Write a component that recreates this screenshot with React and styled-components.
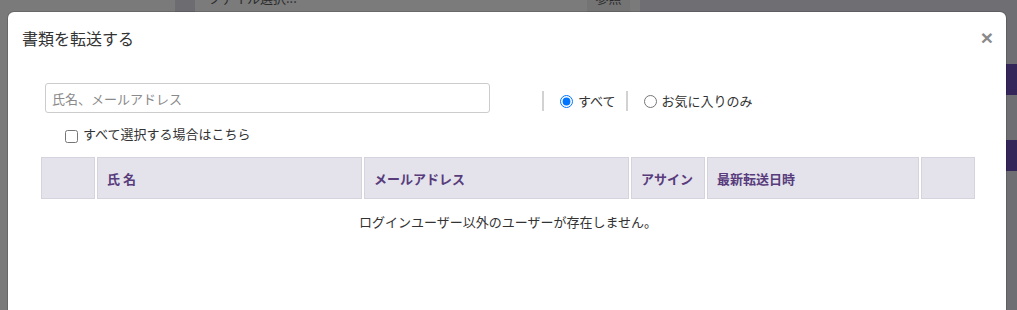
import styled, { createGlobalStyle } from "styled-components";

const GlobalStyle = createGlobalStyle`
  html, body {
    margin: 0;
    padding: 0;
  }
  body {
    font-family: "Noto Sans CJK JP", "Noto Sans", sans-serif;
    color: #333;
    background: #6f6e73;
    overflow: hidden;
  }
`;

const columns = [
  { label: "", width: 54 },
  { label: "氏 名", width: 265 },
  { label: "メールアドレス", width: 265 },
  { label: "アサイン", width: 74 },
  { label: "最新転送日時", width: 212 },
  { label: "", width: 54 },
];

export default function App() {
  return (
    <>
      <GlobalStyle />
      <Screen>
        <LeftPanel>
          <FileGroup>
            <Addon />
            <FileInput>ファイル選択...</FileInput>
            <BrowseButton>参照</BrowseButton>
          </FileGroup>
        </LeftPanel>
        <RightPanel>
          <SideButton>追加</SideButton>
          <SideButton>追加</SideButton>
        </RightPanel>

        <Modal>
          <Header>
            <Title>書類を転送する</Title>
            <Close type="button">×</Close>
          </Header>

          <Body>
            <FilterRow>
              <Search placeholder="氏名、メールアドレス" />
              <RadioGroup>
                <Separator />
                <RadioLabel>
                  <input type="radio" name="scope" defaultChecked />
                  すべて
                </RadioLabel>
                <Separator />
                <RadioLabel>
                  <input type="radio" name="scope" />
                  お気に入りのみ
                </RadioLabel>
              </RadioGroup>
            </FilterRow>

            <CheckRow>
              <input type="checkbox" />
              すべて選択する場合はこちら
            </CheckRow>

            <Table>
              <HeadRow>
                {columns.map((col, i) => (
                  <HeadCell key={i} style={{ width: col.width }}>
                    {col.label}
                  </HeadCell>
                ))}
              </HeadRow>
              <EmptyRow>ログインユーザー以外のユーザーが存在しません。</EmptyRow>
            </Table>
          </Body>
        </Modal>
      </Screen>
    </>
  );
}

const Screen = styled.div`
  position: relative;
  display: flex;
  width: 1017px;
  height: 310px;
  overflow: hidden;
`;

const LeftPanel = styled.div`
  width: 670px;
  background: #7a7a7a;
`;

const RightPanel = styled.div`
  flex: 1;
  display: flex;
  flex-direction: column;
  gap: 45px;
  padding-top: 64px;
  padding-left: 336px;
  background: #6f6e73;
`;

const FileGroup = styled.div`
  display: flex;
  height: 34px;
  margin-top: -22px;
  margin-left: 175px;
  font-size: 13px;
`;

const Addon = styled.div`
  width: 20px;
  background: #6d6c71;
`;

const FileInput = styled.div`
  width: 379px;
  padding: 10px 0 0 13px;
  background: #7b7b7b;
  color: #2a2a2a;
`;

const BrowseButton = styled.div`
  width: 43px;
  padding-top: 10px;
  text-align: center;
  background: #747474;
  color: #2a2a2a;
`;

const SideButton = styled.div`
  width: 40px;
  height: 31px;
  padding-left: 1px;
  line-height: 31px;
  font-size: 13px;
  font-weight: bold;
  color: #9a96a6;
  background: #35265a;
  white-space: nowrap;
`;

const Modal = styled.div`
  position: absolute;
  top: 12px;
  left: 8px;
  width: 998px;
  height: 320px;
  background: #fff;
  border-radius: 6px;
  box-shadow: 0 0 0 1px rgba(0, 0, 0, 0.15);
`;

const Header = styled.div`
  display: flex;
  justify-content: space-between;
  align-items: flex-start;
  padding: 14px 13px 0 14px;
`;

const Title = styled.h4`
  margin: 0;
  font-size: 16px;
  font-weight: normal;
  line-height: 25px;
  color: #333;
`;

const Close = styled.button`
  margin-top: -1px;
  padding: 0;
  border: 0;
  background: none;
  font-family: "Liberation Sans", sans-serif;
  font-size: 21px;
  font-weight: bold;
  line-height: 25px;
  color: #8a8a8a;
  cursor: pointer;
`;

const Body = styled.div`
  padding-top: 32px;
`;

const FilterRow = styled.div`
  display: flex;
  align-items: center;
  padding-left: 37px;
`;

const Search = styled.input`
  box-sizing: border-box;
  width: 445px;
  height: 30px;
  padding: 0 6px;
  border: 1px solid #ccc;
  border-radius: 3px;
  font-family: inherit;
  font-size: 13px;
  color: #333;
  outline: none;

  &::placeholder {
    color: #8a8a8a;
  }
`;

const RadioGroup = styled.div`
  display: flex;
  align-items: center;
  margin-left: 52px;
  margin-top: 6px;
`;

const Separator = styled.span`
  width: 2px;
  height: 20px;
  background: #d2d2d2;
`;

const RadioLabel = styled.label`
  display: flex;
  align-items: center;
  gap: 5px;
  margin: 0 10px 0 16px;
  font-size: 13px;
  line-height: 20px;
  color: #333;

  input {
    width: 13px;
    height: 13px;
    margin: 0;
  }
`;

const CheckRow = styled.label`
  display: flex;
  align-items: center;
  gap: 5px;
  margin-top: 10px;
  padding-left: 57px;
  font-size: 13px;
  line-height: 21px;
  color: #333;

  input {
    width: 13px;
    height: 13px;
    margin: 5px 0 0;
  }
`;

const Table = styled.div`
  width: 934px;
  margin: 13px 0 0 33px;
`;

const HeadRow = styled.div`
  display: flex;
  gap: 2px;
  height: 42px;
`;

const HeadCell = styled.div`
  box-sizing: border-box;
  display: flex;
  align-items: center;
  padding-left: 10px;
  background: #e4e3ec;
  box-shadow: inset 0 0 0 1px #d5d4de;
  font-size: 13px;
  font-weight: bold;
  color: #583c7c;
  white-space: pre;
`;

const EmptyRow = styled.div`
  padding: 13px 0;
  text-align: center;
  font-size: 13px;
  line-height: 20px;
  color: #333;
`;
